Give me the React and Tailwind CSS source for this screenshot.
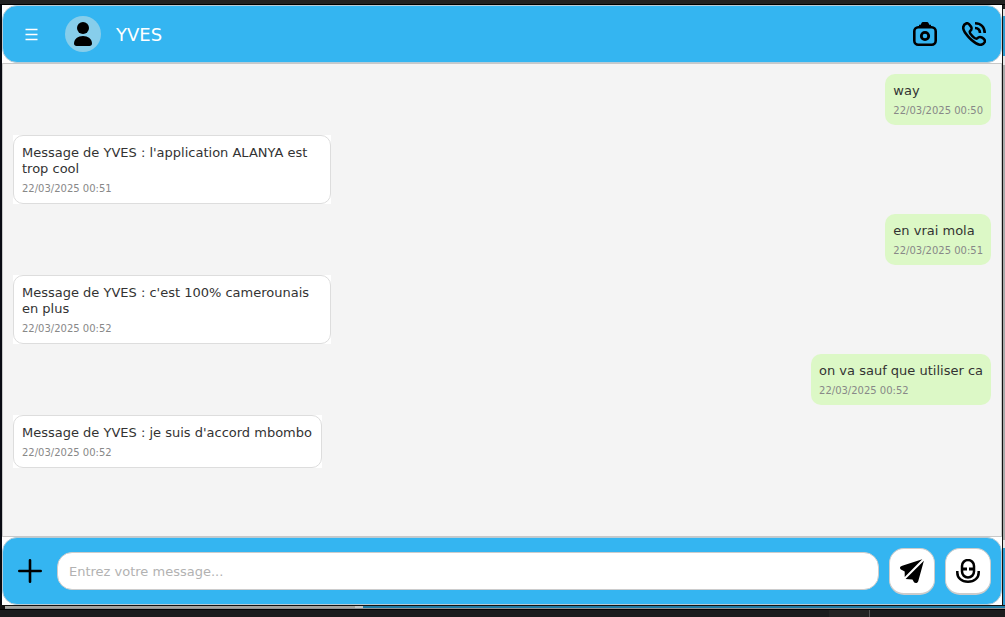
import React from 'react';

const messages = [
  { mine: true, lines: ['way'], time: '22/03/2025 00:50' },
  { mine: false, lines: ["Message de YVES : l'application ALANYA est", 'trop cool'], time: '22/03/2025 00:51', width: 'w-[318px]' },
  { mine: true, lines: ['en vrai mola'], time: '22/03/2025 00:51' },
  { mine: false, lines: ["Message de YVES : c'est 100% camerounais", 'en plus'], time: '22/03/2025 00:52', width: 'w-[318px]' },
  { mine: true, lines: ['on va sauf que utiliser ca'], time: '22/03/2025 00:52' },
  { mine: false, lines: ["Message de YVES : je suis d'accord mbombo"], time: '22/03/2025 00:52', width: 'w-[309px]' },
];

function MessageBody({ lines, time }) {
  return (
    <>
      {lines.map((line) => (
        <p key={line} className="whitespace-nowrap text-[13px] leading-4 text-[#333333]">{line}</p>
      ))}
      <p className="mt-[6px] whitespace-nowrap text-[10px] leading-3 text-[#888888]">{time}</p>
    </>
  );
}

function Message({ mine, lines, time, width }) {
  if (mine) {
    return (
      <div className="self-end rounded-[10px] bg-[#dcf8c6] px-2 pt-[9px] pb-2">
        <MessageBody lines={lines} time={time} />
      </div>
    );
  }
  return (
    <div className={`self-start bg-white ${width}`}>
      <div className="rounded-[10px] border border-[#dddddd] bg-white px-2 pt-[9px] pb-2">
        <MessageBody lines={lines} time={time} />
      </div>
    </div>
  );
}

function Avatar() {
  return (
    <svg className="ml-[27px] h-9 w-9" viewBox="0 0 36 36">
      <circle cx="18" cy="18" r="18" fill="#87ceeb" />
      <circle cx="18" cy="12" r="6" />
      <path d="M9 27.500c0-4.500 4-7.500 9-7.500s9 3 9 7.500c0 1.600-1 2.500-2.500 2.500h-13C10 30 9 29.100 9 27.500z" />
    </svg>
  );
}

function CameraIcon() {
  return (
    <svg className="h-6 w-6" viewBox="0 0 24 24" fill="none" stroke="black">
      <path d="M6 4.500V2.800h1.700L8.500 1Q8.900 0 10 0h4q1.100 0 1.500 1l.8 1.800H18v1.700z" fill="black" stroke="none" />
      <rect x="1.300" y="5.300" width="21.400" height="17.400" rx="4" strokeWidth="2.600" />
      <circle cx="12" cy="14" r="3.700" strokeWidth="2.800" />
    </svg>
  );
}

function PhoneIcon() {
  return (
    <svg className="h-6 w-6" viewBox="0 0 24 24" fill="none" stroke="black" strokeWidth="2.600">
      <path d="M4.600 1.300C6.200 .7 7.300 2 8.900 4.500c1.500 2.400.6 3.300-.8 4.700-1 1 .4 3 2.300 4.900s3.800 3.100 4.800 2.200c1.500-1.500 2.500-2.200 4.900-.6 2.500 1.600 3.600 2.600 2.700 4.300-2.300 4.300-7.200 3.500-12.900-1.700-1.400-1.300-2.500-2.400-3.900-4C.5 8.300-.7 3.600 4.600 1.300z" />
      <path d="M13 1.300c5.800.1 9.600 3.900 9.700 9.700M13 6c3 .1 4.900 2 5 5" />
    </svg>
  );
}

function SendIcon() {
  return (
    <svg className="h-6 w-6" viewBox="0 0 24 24">
      <path d="M22.300.2 3 6.600C1 7.300 0 7.800 0 8.700c0 1.200.9 1.900 2.400 2.600l2.300 1.200v5.500z" />
      <path d="M23.900 1.700 18.300 22c-.5 1.400-1.300 2-2.400 2-1.400 0-2-.8-2.700-2.200l-.8-1.200-6.800-.6z" />
    </svg>
  );
}

function MicIcon() {
  return (
    <svg className="h-6 w-6" viewBox="0 0 24 24" fill="none" stroke="black" strokeWidth="2.500">
      <rect x="6" y="1" width="12" height="17.500" rx="6" />
      <path d="M1.300 12v1.500C1.300 19 5.500 22.700 12 22.700s10.700-3.700 10.700-9.200V12" />
      <path d="M6 10h5M13 10h5" strokeWidth="2.800" />
    </svg>
  );
}

export default function App() {
  return (
    <div className="flex h-[617px] w-[1005px] flex-col overflow-hidden bg-[#1b1b1d] font-['DejaVu_Sans',sans-serif]">
      <div className="h-1 shrink-0 bg-[#222222]" />
      <div className="h-px shrink-0 bg-black" />
      <div className="flex h-[600px] shrink-0">
        <div className="w-[2px] bg-[#080a12]" />
        <main className="flex w-[1000px] flex-col">
          <div className="h-[58px] shrink-0 bg-white">
            <header className="flex h-full items-center rounded-[15px] border border-[#b8cbd5] bg-[#34b5f1] pr-[15px] pl-[22px]">
              <svg className="h-[13px] w-[13px]" viewBox="0 0 13 13" stroke="white" strokeWidth="1.300">
                <path d="M.5 1.500h12M.5 6.500h12M.5 11.500h12" />
              </svg>
              <Avatar />
              <h1 className="ml-[15px] pt-0.5 text-[18px] leading-6 text-white">YVES</h1>
              <div className="ml-auto flex items-center gap-[25px]">
                <CameraIcon />
                <PhoneIcon />
              </div>
            </header>
          </div>
          <section className="flex h-[474px] shrink-0 flex-col gap-[10px] border border-[#c8c8c8] bg-[#f4f4f4] p-[10px]">
            {messages.map((message) => (
              <Message key={message.lines[0]} {...message} />
            ))}
          </section>
          <div className="h-[68px] shrink-0 bg-white">
            <footer className="flex h-full items-center rounded-[15px] border border-[#b8cbd5] bg-[#34b5f1] px-[10px]">
              <svg className="mx-[5px] h-6 w-6" viewBox="0 0 24 24" stroke="black" strokeWidth="2.600" strokeLinecap="round">
                <path d="M1.300 12h21.400M12 1.300v21.400" />
              </svg>
              <input
                className="ml-[10px] h-[38px] w-[822px] rounded-[15px] border border-[#cccccc] bg-white px-[11px] text-[13px] text-[#333333] outline-none placeholder:text-[#b2b2b2] placeholder:opacity-100"
                placeholder="Entrez votre message..."
              />
              <button aria-label="Envoyer" className="ml-[10px] flex h-[47px] w-[46px] items-center justify-center rounded-[15px] border border-b-2 border-[#cccccc] bg-white">
                <SendIcon />
              </button>
              <button aria-label="Microphone" className="ml-[10px] flex h-[47px] w-[46px] items-center justify-center rounded-[15px] border border-b-2 border-[#cccccc] bg-white">
                <MicIcon />
              </button>
            </footer>
          </div>
        </main>
        <div className="w-px bg-[#111111]" />
        <div className="flex w-[2px] flex-col">
          <div className="h-1 bg-[#222222]" />
          <div className="h-[7px] bg-[#e4e4e4]" />
          <div className="h-[40px] bg-[#2c9ace]" />
          <div className="h-[9px] bg-[#e4e4e4]" />
          <div className="h-[475px] bg-[#a9a9a9]" />
          <div className="h-[8px] bg-[#e4e4e4]" />
          <div className="flex-1 bg-[#2c9ace]" />
        </div>
      </div>
      <div className="h-px shrink-0 bg-[#111111]" />
      <div className="flex h-[2px] shrink-0">
        <div className="w-[5px] bg-[#101010]" />
        <div className="w-[350px] bg-[#a5a5a1]" />
        <div className="w-[8px] bg-[#c4c8c8]" />
        <div className="flex-1 bg-[#217ca5]" />
      </div>
      <div className="flex h-px shrink-0">
        <div className="w-[5px] bg-[#101010]" />
        <div className="flex-1 bg-[#8f9294]" />
      </div>
      <div className="h-px shrink-0 bg-black" />
      <div className="flex flex-1">
        <div className="w-[829px]" />
        <div className="w-10 bg-[#232323]" />
        <div className="w-px bg-[#555555]" />
      </div>
    </div>
  );
}
